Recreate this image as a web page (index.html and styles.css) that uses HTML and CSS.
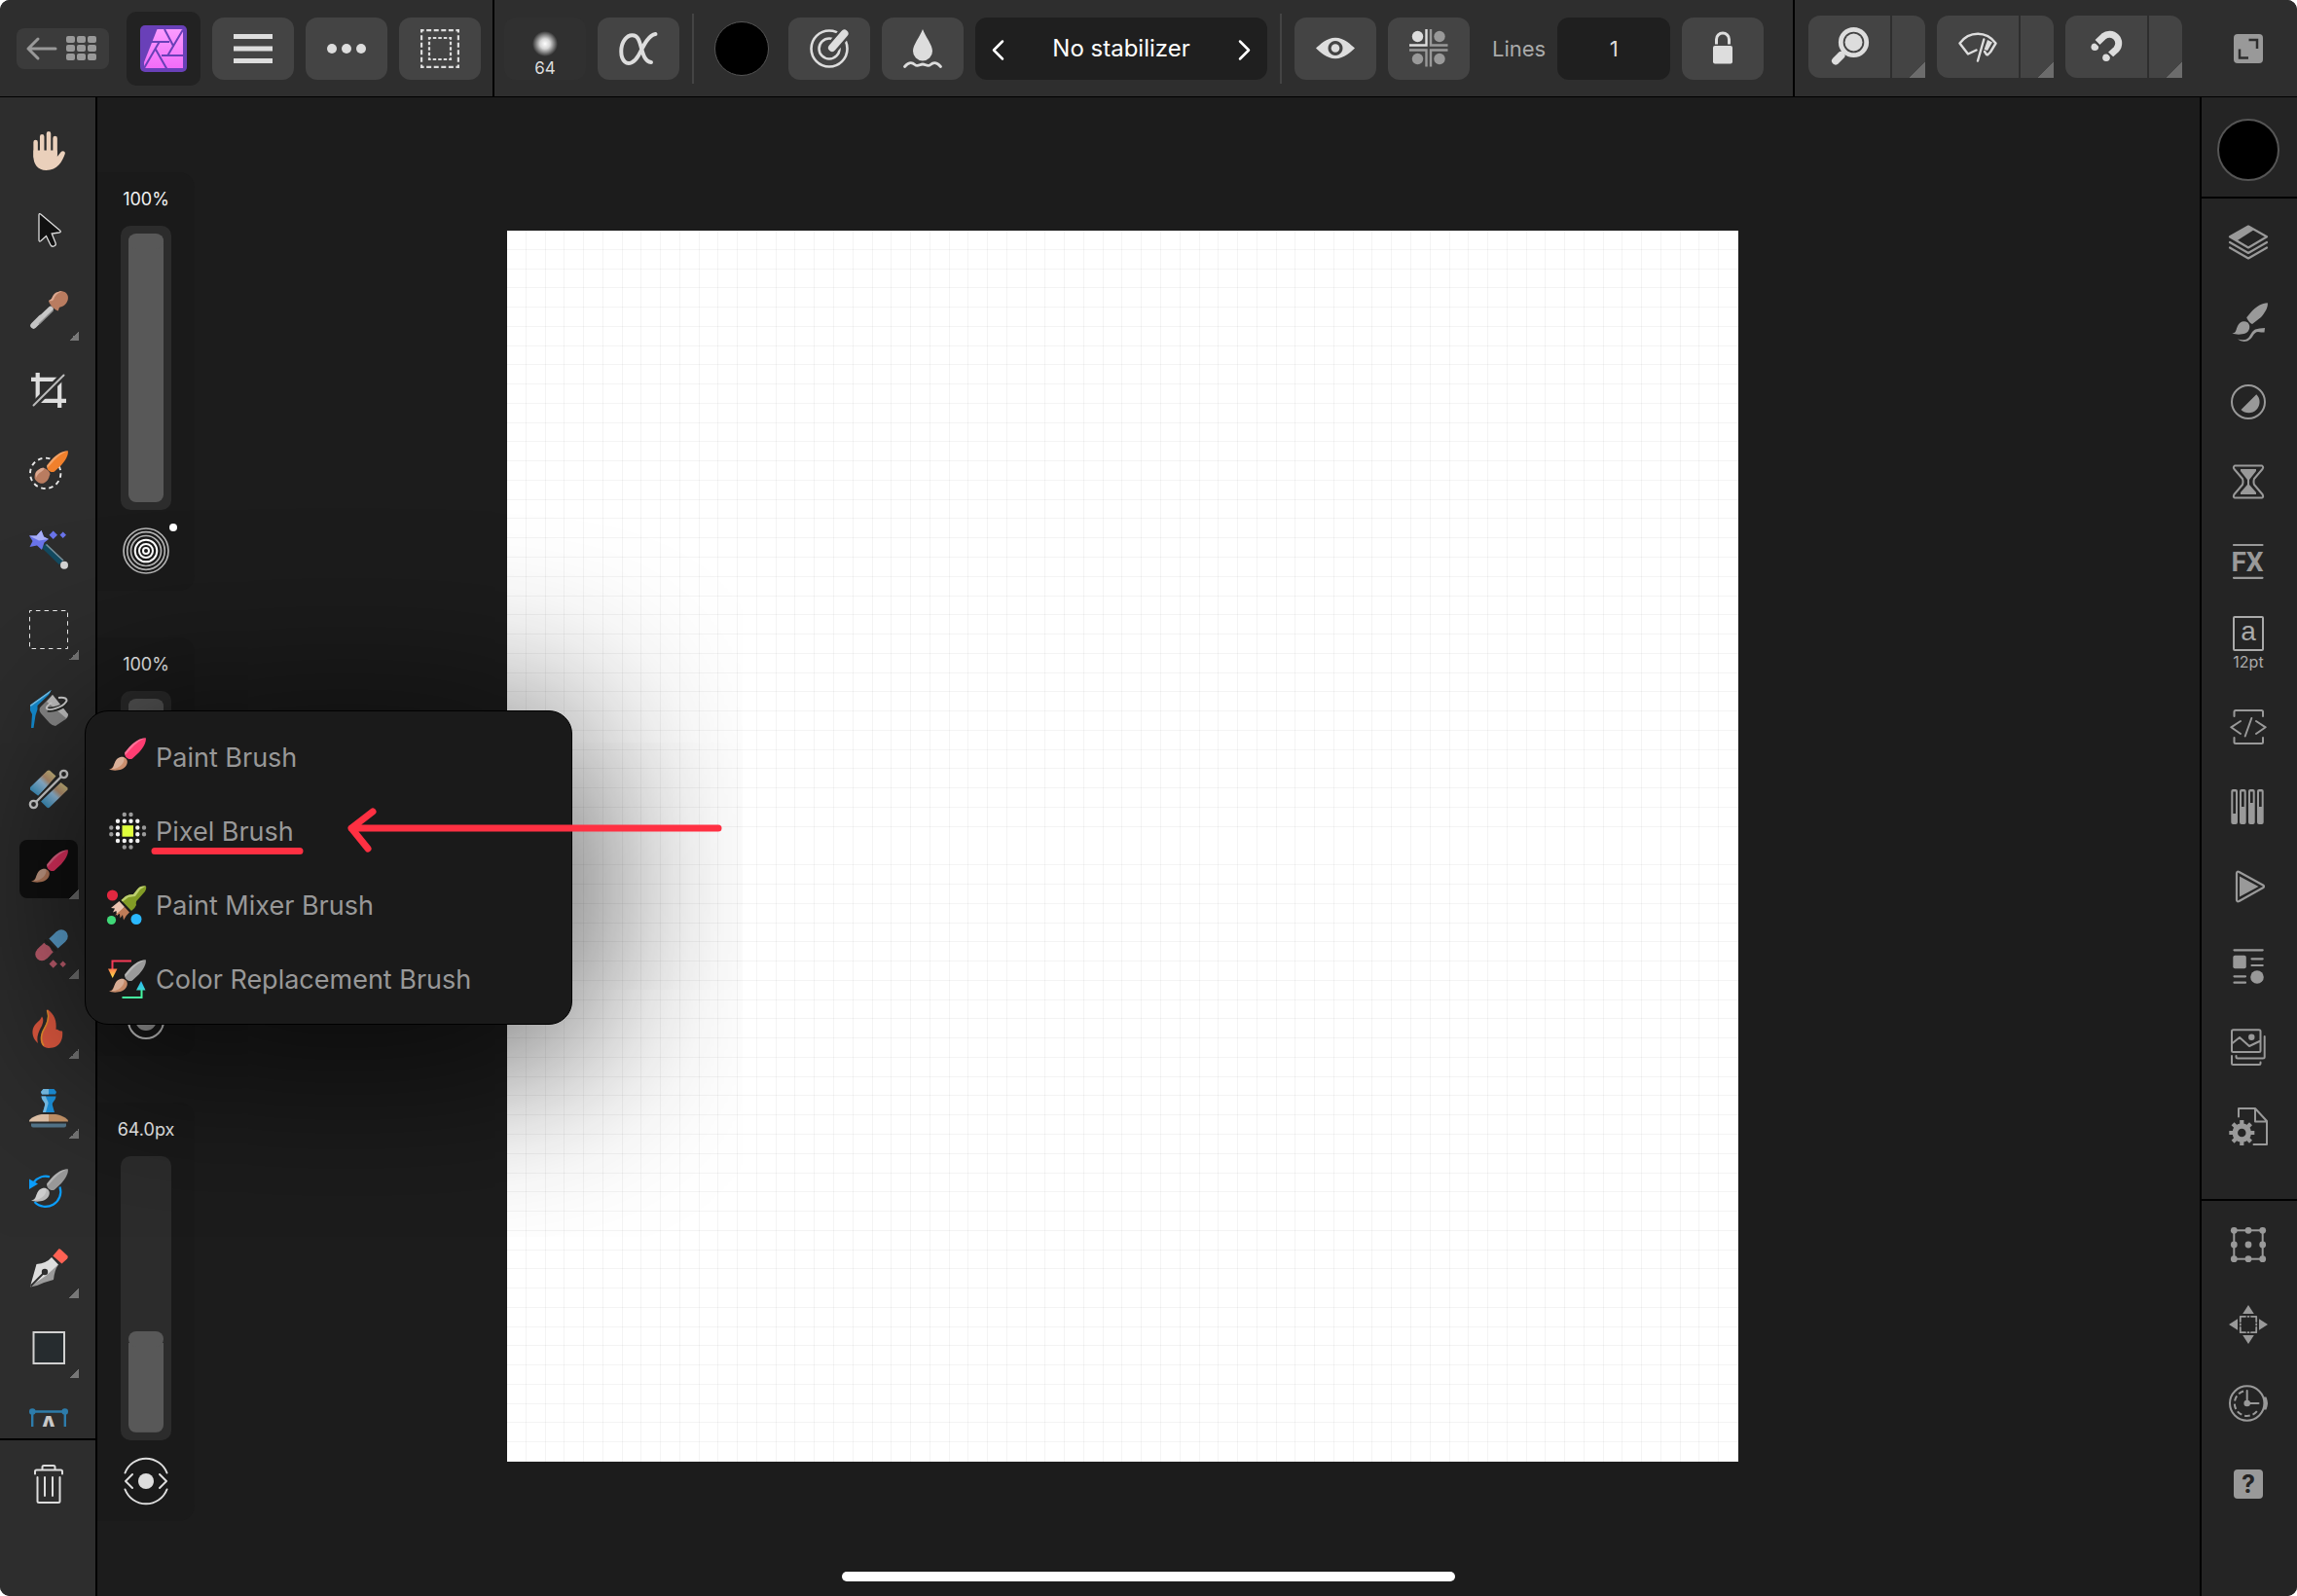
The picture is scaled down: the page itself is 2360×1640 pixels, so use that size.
FILE: index.html
```html
<!DOCTYPE html>
<html lang="en">
<head>
<meta charset="utf-8">
<meta name="viewport" content="width=device-width, initial-scale=1">
<title>Photo editor</title>
<link rel="stylesheet" href="styles.css">
</head>
<body>
<svg class="defs" width="0" height="0" aria-hidden="true">
  <defs>
    <linearGradient id="tanBlue" x1="1" y1="0" x2="0" y2="1"><stop offset="0" stop-color="#e0d68a"/><stop offset=".35" stop-color="#c09a78"/><stop offset=".5" stop-color="#9cc8ea"/><stop offset="1" stop-color="#2089bd"/></linearGradient>
    <linearGradient id="pink" x1="0" y1="0" x2="0" y2="1"><stop offset="0" stop-color="#fb9cff"/><stop offset="1" stop-color="#f26cf8"/></linearGradient>
    <linearGradient id="warm" x1="0" y1="0" x2="0" y2="1"><stop offset="0" stop-color="#fa7a4c"/><stop offset="1" stop-color="#ffe94a"/></linearGradient>
    <linearGradient id="cool" x1="0" y1="0" x2="0" y2="1"><stop offset="0" stop-color="#2cb4f6"/><stop offset="1" stop-color="#3cd8d0"/></linearGradient>
    <radialGradient id="soft"><stop offset="0" stop-color="#fff"/><stop offset=".4" stop-color="#fff" stop-opacity=".8"/><stop offset="1" stop-color="#fff" stop-opacity="0"/></radialGradient>
    <symbol id="handle" viewBox="0 0 40 40"><path fill="currentColor" d="M39.8.3C34 .5 28 4 23 9.500L18.200 15.200C18 18 19 20 21 21.200C23 22.500 25 22.200 26 21.500L33 15C38 9.500 40.500 4 39.800.3Z"/><path fill="#fff" fill-opacity=".28" d="M39.800.3C34 .5 28 4 23 9.500L18.200 15.200C18 16 18 17 18.600 18L24 12C29 6.500 33 3 39.800.3Z"/></symbol>
    <symbol id="bristle" viewBox="0 0 40 40"><path fill="currentColor" d="M2 32.600C6 32 6.500 29 8 25.500C10 20.500 15.500 18 19.500 21.500C23 25.500 19 31 15 32.600C11 34 5 34 2 32.600Z"/><path fill="#fff" fill-opacity=".3" d="M4 32.500C7 31.500 6.500 29 8 25.500C10 20.500 14.500 19 17.500 20.300C18.500 25 14 32 4 32.500Z"/></symbol>
  </defs>
</svg>

<div class="app">
  <header class="topbar">
    <div class="group group-file">
      <button class="back" aria-label="Back to documents"><svg width="95" height="42" viewBox="0 0 95 42"><path class="line" stroke-width="3" d="M40 21H12M22 11 12 21 22 31"/><g fill="currentColor"><rect x="51" y="8" width="9" height="7" rx="2"/><rect x="62" y="8" width="9" height="7" rx="2"/><rect x="73" y="8" width="9" height="7" rx="2"/><rect x="51" y="17" width="9" height="7" rx="2"/><rect x="62" y="17" width="9" height="7" rx="2"/><rect x="73" y="17" width="9" height="7" rx="2"/><rect x="51" y="26" width="9" height="7" rx="2"/><rect x="62" y="26" width="9" height="7" rx="2"/><rect x="73" y="26" width="9" height="7" rx="2"/></g></svg></button>
      <button class="persona" aria-label="Photo persona"><svg width="48" height="48" viewBox="0 0 48 48"><rect width="48" height="48" rx="5" fill="#6940b8"/><path fill="url(#pink)" d="M17.500 4H44V44H4V38Z"/><path fill="none" stroke="#6940b8" stroke-width="2" d="M25 4 34 21M44 4.500 28 31.500M22 31H44M15.500 24 27.500 45M4 44 20 16.500M8 17H30"/></svg></button>
      <button class="btn" aria-label="Menu"><svg class="icon" viewBox="0 0 40 40"><path fill="currentColor" d="M0 5h40v5H0zM0 17.500h40v5H0zM0 30h40v5H0z"/></svg></button>
      <button class="btn" aria-label="More"><svg class="icon" viewBox="0 0 40 40"><g fill="currentColor"><circle cx="5" cy="20" r="5"/><circle cx="20" cy="20" r="5"/><circle cx="35" cy="20" r="5"/></g></svg></button>
      <button class="btn" aria-label="Selection"><svg class="icon" viewBox="0 0 40 40"><g fill="none" stroke="currentColor" stroke-width="2.200"><rect x="1.100" y="1.100" width="37.800" height="37.800" stroke-dasharray="5 2.560" stroke-dashoffset="2.500"/><rect x="9" y="9" width="22" height="22" stroke-dasharray="3.500 2" stroke-dashoffset="1.700"/></g></svg></button>
    </div>

    <div class="group group-context">
      <button class="btn preview" aria-label="Brush size"><svg width="28" height="28" viewBox="0 0 28 28"><circle cx="14" cy="13" r="13" fill="url(#soft)"/></svg><span>64</span></button>
      <button class="btn" aria-label="Protect alpha"><svg class="icon" viewBox="0 0 40 40"><path class="line" stroke-width="4" d="M37.500 5C29 6.500 24 20 20 27C16 34 10 37 6 33.500C1 29 1 17 6 10.500C10 5 17 4.500 20 10.500C24 19 24 33 33 34"/></svg></button>
      <span class="separator"></span>
      <button class="swatch" aria-label="Brush color"></button>
      <button class="btn" aria-label="Brush settings"><svg class="icon" viewBox="0 0 40 40"><circle class="line" cx="20" cy="20" r="18.500" stroke-width="2.600"/><circle class="line" cx="20" cy="20" r="10.500" stroke-width="2.600"/><path stroke="#444" stroke-width="13" stroke-linecap="round" d="M24 18 35 5"/><path class="line" stroke-width="8" d="M23 19 35.500 4.500"/></svg></button>
      <button class="btn" aria-label="Wet edges"><svg class="icon" viewBox="0 0 40 40"><path fill="currentColor" d="M20 0C23 8 30 16 30 22.500A10 10 0 0 1 10 22.500C10 16 17 8 20 0Z"/><path class="line" stroke-width="2.800" d="M1.500 38.500C6 33.500 9 34 12 36.500C15 39 17 36 20 36C23 36 25 39 28 36.500C31 34 34 33.500 38.500 38.500"/></svg></button>
      <div class="stepper">
        <button aria-label="Previous stabilizer"><svg width="20" height="24" viewBox="0 0 20 24"><path class="line" stroke-width="2.500" d="M14 4.500 5 13.500 14 22.500"/></svg></button>
        <span>No stabilizer</span>
        <button aria-label="Next stabilizer"><svg width="20" height="24" viewBox="0 0 20 24"><path class="line" stroke-width="2.500" d="M6 4.500 15 13.500 6 22.500"/></svg></button>
      </div>
      <span class="separator"></span>
      <button class="btn" aria-label="Show symmetry"><svg class="icon" viewBox="0 0 40 40"><path fill="currentColor" fill-rule="evenodd" d="M0 19.500C4 16 11 8.700 20 8.700S36 16 40 19.500C36 23 29 30.300 20 30.300S4 23 0 19.500ZM20 12a7.500 7.500 0 1 0 .01 0Z"/><circle cx="20" cy="19.500" r="4.300" fill="currentColor"/></svg></button>
      <button class="btn" aria-label="Mirror"><svg class="icon" viewBox="0 0 40 40"><g fill="#999"><circle cx="31" cy="7.500" r="5.700"/><circle cx="8.500" cy="30.500" r="5.700"/><circle cx="31" cy="30.500" r="5.700"/></g><circle cx="8.500" cy="7.500" r="5.700" fill="currentColor"/><g fill="none" stroke-width="2.400" stroke="#999"><path d="M22 0V16.500H39.500M39.500 21.500H22V38.500M17.500 38.500V21.500H0"/><path stroke="#dcdcdc" d="M17.500 0V16.500H0"/></g></svg></button>
      <label class="field-label" for="lines">Lines</label>
      <input class="field" id="lines" type="text" value="1">
      <button class="btn" aria-label="Lock"><svg class="icon" viewBox="0 0 40 40"><rect x="10" y="17" width="20" height="18.500" rx="2" fill="currentColor"/><path fill="none" stroke="currentColor" stroke-width="3" d="M13.500 15.500V10.500A6.500 6.500 0 0 1 26.500 10.500V15.500"/></svg></button>
    </div>

    <div class="group group-view">
      <div class="split"><button aria-label="Zoom preview"><svg class="icon" viewBox="0 0 40 40"><circle cx="24.500" cy="15.500" r="13.200" fill="none" stroke="currentColor" stroke-width="4.800"/><circle cx="24.500" cy="15.500" r="9" fill="currentColor"/><path class="line" stroke-width="8" d="M11.500 29 6 34.500"/></svg></button><button class="more" aria-label="Zoom options"></button></div>
      <div class="split"><button aria-label="Clear view"><svg class="icon" viewBox="0 0 40 40"><path class="line" stroke-width="2.400" d="M18.500 23.500 10 27.500 1.500 16.500C11 3.500 29 3.500 38.500 16.500L33 25.500 30 28.500M26.300 12.500 20 34.500M27 25 29 28"/><path fill="currentColor" d="M30 13 35 15.500 30 24 26.500 23Z"/></svg></button><button class="more" aria-label="Clear view options"></button></div>
      <div class="split"><button aria-label="Snapping"><svg class="icon" viewBox="0 0 40 40"><path fill="none" stroke="currentColor" stroke-width="7" d="M11 15.500 17.500 9.300A9.300 9.300 0 0 1 30.500 22.500L24 28.500"/><g fill="currentColor"><circle cx="8.300" cy="20.300" r="3.800"/><circle cx="20" cy="31.200" r="3.800"/></g><path stroke="#444" stroke-width="2" d="M8 14.500 14 20M20.500 25.500 27 31.500"/></svg></button><button class="more" aria-label="Snapping options"></button></div>
      <button class="fullscreen" aria-label="Full screen"><svg width="30" height="30" viewBox="0 0 30 30"><rect width="30" height="30" rx="4" fill="#999"/><path fill="none" stroke="#2e2e2e" stroke-width="2.500" d="M15.500 6H24V15M6 15.500V24.500H15"/></svg></button>
    </div>
  </header>

  <nav class="tools" aria-label="Tools">
    <div class="tool-list">
      <button class="tool" aria-label="Hand"><svg class="icon" viewBox="0 0 40 40"><path fill="none" stroke="#ead0bb" stroke-width="4.500" stroke-linecap="round" d="M6.600 11V26M13.200 5.200V24M20 2.300V24M26.600 7V24"/><path fill="#ead0bb" d="M4.400 19.500H28.800V26L33 20.800C34.500 19.300 37.500 20.500 36.800 23C34 31 29 40 17.500 40C8.500 40 4.400 33 4.400 26Z"/></svg></button>
      <button class="tool" aria-label="Move"><svg class="icon" viewBox="0 0 40 40"><path fill="#111" stroke="#ddd" stroke-width="1.300" d="M10 4V29.500Q10 32 12 30.500L17.500 25.500 21.800 34.500Q23 37 25.500 36Q28 35 27 32.500L23.200 23 30.500 22Q33.500 21.500 31.500 19.800L12 3.200Q10 1.800 10 4Z"/></svg></button>
      <button class="tool has-more" aria-label="Color picker"><svg class="icon" viewBox="0 0 40 40"><path stroke="#c8c8c8" stroke-width="5.500" stroke-linecap="round" d="M22 18.500 12 28"/><path stroke="#c4c4c4" stroke-width="6.500" stroke-linecap="round" d="M12 28 4.500 35.500"/><path stroke="#8f8f8f" stroke-width="1.500" d="M24.500 20 10 34"/><path fill="#b97c60" d="M20 10.500C21 8.500 22.500 9.500 23.500 7C25 2 30 0 34 .2C38.500.8 41 5 39.600 9.500C38 14 35 16 32 16.500C30 17 31 19 29.500 20.500C26 19 21.500 15 20 10.500Z"/><path fill="#dba890" d="M20 10.500C21 8.500 22.500 9.500 23.500 7C25 2 30 0 34 .2C29 2 26 5 25 9C23 11 22 10 20 10.500Z"/></svg></button>
      <button class="tool" aria-label="Crop"><svg class="icon" viewBox="0 0 40 40"><path fill="none" stroke="#ddd" stroke-width="4.200" d="M8.700 2V30.900H38M2 8.900H31.200V38"/><path stroke="#2d2d2d" stroke-width="7" d="M4.500 35.500 35.500 4.500"/><path stroke="#bbb" stroke-width="2" stroke-linecap="round" d="M4.500 35.500 35.500 4.500"/></svg></button>
      <button class="tool" aria-label="Selection brush"><svg class="icon" viewBox="0 0 40 40"><circle cx="16.700" cy="23.300" r="15.700" fill="none" stroke="#e8e8e8" stroke-width="1.900" stroke-dasharray="4.500 3.700"/><path stroke="#2d2d2d" stroke-width="11" d="M17 22 31 8"/><use href="#handle" color="#f0802c"/><path fill="#b97c60" d="M7 22C10 19 13 17 15.500 18C18 19 21 21 21.500 24C20 27 21 30 15 33.500C11 35 6 31 5.500 28C5.500 25 6 23 7 22Z"/><path fill="#dba890" d="M7 22C10 19 13 17 15.500 18C15 22 10 21 7 28Q6 25 7 22Z"/></svg></button>
      <button class="tool" aria-label="Flood select"><svg class="icon" viewBox="0 0 40 40"><path stroke="#134a60" stroke-width="6.500" d="M15 15.500 33 33"/><path stroke="#7b929c" stroke-width="1.600" d="M17.500 14.500 35 31"/><circle cx="36" cy="35.700" r="4" fill="#d5d5d5"/><path fill="#6a74ea" d="M12.500 0 15 6.500 20 9 15.500 12.500 13 20 8 15.500.5 17 3.500 11 0 5.500 7.500 5.500Z"/><path fill="#aab0f8" d="M12.500 0 15 6.500 20 9 10 10.500 0 5.500 7.500 5.500Z"/><path fill="#6a74ea" d="M24.700.5 29 4.700 24.700 9 20.500 4.700ZM34.700 1.500 38 4.700 34.700 8 31.500 4.700Z"/></svg></button>
      <button class="tool has-more" aria-label="Marquee"><svg class="icon" viewBox="0 0 40 40"><rect x=".5" y=".5" width="39" height="39" fill="none" stroke="#f0f0f0" stroke-width="1" stroke-dasharray="4.500 4.167" stroke-dashoffset="2.250"/></svg></button>
      <button class="tool" aria-label="Flood fill"><svg class="icon" viewBox="0 0 40 40"><path fill="#1590d6" d="M22.700 0 1 15.500V21L3 25 2 39H4.500L6.500 26 8.500 20V16L20 5Z"/><path fill="#7cc8f0" d="M22.700 0 1 15.500 1.500 17 21 3Z"/><path fill="#8a8a8a" d="M12 17 24 5 40 25Q40 29 36 31L27 37Q24 37 21 34L12 24Q9 20 12 17Z"/><path fill="#c4c4c4" d="M24 5 40 25Q40 27 38 29L18 12Z"/><path fill="none" stroke="#262826" stroke-width="5" d="M19 20C24 21 36 18 38 12"/><path fill="none" stroke="#d5d5d5" stroke-width="2" d="M30 8C36 7 40 9 38 12C34 18 20 22 18 19C17 17 20 15 23 13"/></svg></button>
      <button class="tool" aria-label="Gradient"><svg class="icon" viewBox="0 0 40 40"><path fill="url(#tanBlue)" d="M18.500 1Q20.500 0 22 1.500L27.500 6.500 9.500 27 1 20.500V18Z"/><path fill="url(#tanBlue)" d="M32.500 13 39.500 18.500V20.500L21 38.500Q19.500 40 18 38.500L12 32.500Z"/><path stroke="#2a2b2a" stroke-width="6" d="M7 33 33 7"/><path stroke="#ddd" stroke-width="2.400" d="M7 33 33 7"/><g fill="none" stroke="#ddd" stroke-width="2.400"><circle cx="4.500" cy="35.500" r="3.600"/><circle cx="35.500" cy="4.500" r="3.600"/></g></svg></button>
      <button class="tool has-more active" aria-label="Paint brush"><svg class="icon" viewBox="0 0 40 40"><use href="#handle" color="#f53568"/><use href="#bristle" color="#c68664"/></svg></button>
      <button class="tool has-more" aria-label="Erase"><svg class="icon" viewBox="0 0 40 40"><path fill="none" stroke="#cf6577" stroke-width="13.500" stroke-linecap="round" d="M13 25.500 16 22.500"/><path stroke="#cf6577" stroke-width="13.500" d="M13 25.500 20 18.500"/><path stroke="#63aee0" stroke-width="13.500" stroke-linecap="round" d="M31 9 33 7"/><path stroke="#63aee0" stroke-width="13.500" d="M25 14.500 33 7"/><path stroke="#242624" stroke-width="2" d="M16 11 28 22"/><path fill="#cf6577" d="M24.700 31.300 28.900 35.500 24.700 39.700 20.500 35.500ZM34.700 32.500 37.900 35.700 34.700 38.900 31.500 35.700Z"/></svg></button>
      <button class="tool has-more" aria-label="Burn"><svg class="icon" viewBox="0 0 40 40"><path fill="#e85c42" d="M13 7.500C15 10 14.500 13 13 17C9 24 7.500 29 9 35C4 31 2 24 4.500 18.500C7 13.500 11.500 12 13 7.500Z"/><path fill="#e85c42" d="M18.500 0C26 5 28.500 12 27.500 21C29.500 20 30.500 23 34 22.500C35 29 33 40 20 40C12 40 9.500 31 13.500 23C16 18 21 10 18.500 0Z"/><path fill="none" stroke="#f09a2e" stroke-width="1.500" d="M18.500 1C22 12 16 18 13.500 24Q11 32 15 37.500"/></svg></button>
      <button class="tool has-more" aria-label="Clone"><svg class="icon" viewBox="0 0 40 40"><path fill="#1c94e0" d="M14.500 0H25.500L28 3 27 5.500H13L12 3ZM12.500 7.500H27.500C27 13 23 13 24 17L26 24H14L16 17C17 13 13 13 12.500 7.500Z"/><path fill="#7cc4ee" d="M14.500 0H20V5.500H13L12 3ZM12.500 7.500H17C18 12 21 13 19 17L17 24H14L16 17C17 13 13 13 12.500 7.500Z"/><path fill="#e8c9ae" d="M0 33C0 30 9 26 13 26H20V33.500H0Z"/><path fill="#c9986c" d="M20 26H27C31 26 40 30 40 33V33.500H20Z"/><path fill="#56788e" d="M2 35.500H38V37.500Q38 39.500 36 39.500H4Q2 39.500 2 37.500Z"/></svg></button>
      <button class="tool" aria-label="Undo brush"><svg class="icon" viewBox="0 0 40 40"><path fill="none" stroke="#0ca0ff" stroke-width="2.200" d="M21 8.200A15.500 15.500 0 0 0 5 13.500M31.500 18.500A15.500 15.500 0 0 1 5.500 34"/><path fill="#0ca0ff" d="M0 10.500 9 15.500 0 21Z"/><path stroke="#2d2d2d" stroke-width="10" d="M21 19 30 10"/><use href="#handle" color="#9c9c9c"/><use href="#bristle" color="#bdbdbd"/></svg></button>
      <button class="tool has-more" aria-label="Pen"><svg class="icon" viewBox="0 0 40 40"><path fill="#ff6254" d="M30.500.3Q31.500 0 32.500 1L39.500 7.500Q40.300 9 39 10.500L33.500 15.500 24.300 7.500Z"/><path fill="#9a9a9a" d="M1 39.500 30 16.500Q26 22 25 32Q17 34 8 38Z"/><path fill="#dedede" d="M1 39 7.500 16Q18 15 23 9L30 16.500 17 28Z"/><path stroke="#2d2d2d" stroke-width="1.800" d="M1.500 38.500 16 24"/><circle cx="16" cy="24" r="3.200" fill="#2d2d2d"/></svg></button>
      <button class="tool has-more" aria-label="Rectangle"><svg class="icon" viewBox="0 0 40 40"><rect x="4.500" y="4" width="31.500" height="32" fill="#262c2f" stroke="#d0d0d0" stroke-width="2"/></svg></button>
      <button class="tool" aria-label="Text"><svg class="icon" viewBox="0 0 40 40"><path fill="none" stroke="#2d7cab" stroke-width="2.400" d="M3.200 36V3.500H36.800V36Z"/><circle cx="3.300" cy="3.500" r="3.300" fill="#2d7cab"/><circle cx="36.700" cy="3.500" r="3.300" fill="#2d7cab"/><text x="20" y="29" text-anchor="middle" font-size="28" font-weight="600" fill="#c8c8c8">A</text></svg></button>
    </div>
    <div class="tool-footer">
      <button class="tool" aria-label="Delete"><svg class="icon" viewBox="0 0 40 40"><path class="line" stroke-width="2" d="M6 9.500V7Q6 5.500 7.500 5.500H32.500Q34 5.500 34 7V9.500M13.500 5V2.500Q13.500 1 15 1H25Q26.500 1 26.500 2.500V5M8.500 13V37.500Q8.500 39 10 39H30Q31.500 39 31.500 37.500V13M16 13V32M24 13V32"/></svg></button>
    </div>
  </nav>

  <main class="workspace">
    <div class="sliders">
      <div class="slider">
        <label for="opacity">100%</label>
        <input id="opacity" type="range" min="0" max="100" value="100" style="--level:100%">
        <svg width="48" height="48" viewBox="0 0 48 48"><g fill="none" stroke="#b5b5b5" stroke-width="1.700"><circle cx="24" cy="24" r="23"/><circle cx="24" cy="24" r="19.300"/><circle cx="24" cy="24" r="15.500"/></g><g fill="none" stroke="#fff" stroke-width="2"><circle cx="24" cy="24" r="11.300"/><circle cx="24" cy="24" r="7"/><circle cx="24" cy="24" r="3"/></g><circle cx="52" cy="0" r="4" fill="#fff"/></svg>
      </div>
      <div class="slider">
        <label for="flow">100%</label>
        <input id="flow" type="range" min="0" max="100" value="100" style="--level:100%">
        <svg width="48" height="48" viewBox="0 0 48 48"><circle cx="24" cy="29" r="18" fill="none" stroke="#ddd" stroke-width="2"/><circle cx="24" cy="28" r="11" fill="#aaa"/></svg>
      </div>
      <div class="slider">
        <label for="width">64.0px</label>
        <input id="width" type="range" min="0" max="100" value="34" style="--level:34%">
        <svg width="48" height="48" viewBox="0 0 48 48"><path class="line" stroke-width="2" d="M2.500 15.500A23 23 0 0 1 45.500 15.500M2.500 32.500A23 23 0 0 0 45.500 32.500M10 17 3 24 10 31M38 17 45 24 38 31"/><circle cx="24" cy="24" r="8" fill="#ddd"/></svg>
      </div>
    </div>
    <div class="stage"><div class="canvas"></div></div>
    <div class="home-indicator"></div>
  </main>

  <aside class="studio" aria-label="Studio panels">
    <div class="studio-color"><button class="swatch large" aria-label="Color"></button></div>
    <div class="studio-list studio-main">
      <button class="panel" aria-label="Layers"><svg class="icon" viewBox="0 0 40 40"><path class="line" stroke-width="2.200" d="M1 14.300 20 3.500 39 14.300 20 25.500ZM1 20 20 31 39 20M1 25.500 20 36.500 39 25.500"/><path fill="currentColor" d="M1 14.300 20 3.500 26 7 8 18.500Z"/></svg></button>
      <button class="panel" aria-label="Brushes"><svg class="icon" viewBox="0 0 40 40"><path fill="currentColor" d="M39.800.3C34 .5 28 4 23 9.500L18.200 15.200Q20 20 24 22L33 15C38 9.500 40.500 4 39.800.3ZM3.300 31.500C8 31 7 28 9 24C11 19 16 18 19.500 20.500C23 24 21 30 17 31.500C13 33 7 33 3.300 31.500ZM9 37.500Q13 38.500 17 38C22 37 22 30 27 27.500Q31 26 37 26L36.500 30.500Q33 30.500 30 30C25 30 25 37 19 39.500Q13 41 9 37.500Z"/></svg></button>
      <button class="panel" aria-label="Adjustments"><svg class="icon" viewBox="0 0 40 40"><circle class="line" cx="20" cy="20" r="17" stroke-width="2"/><path fill="currentColor" d="M12.500 28 28.300 12.200A11 11 0 0 1 12.500 28Z"/></svg></button>
      <button class="panel" aria-label="History"><svg class="icon" viewBox="0 0 40 40"><path class="line" stroke-width="2" d="M6 3.500H34Q36 5 34.500 7L26 17Q25 20 26 23L34.500 33Q36 36 34 36.500H6Q4 36 5.500 33L14 23Q15 20 14 17L5.500 7Q4 5 6 3.500Z"/><path fill="currentColor" d="M12 7H28V9L21 18V23L28 31V33H12V31L19 23V18L12 9Z"/></svg></button>
      <button class="panel" aria-label="Layer effects"><svg class="icon" viewBox="0 0 40 40"><path class="line" stroke-width="2.200" d="M5 3H34.500M5 36.800H34.500"/><text class="fx" x="19" y="30" text-anchor="middle">FX</text></svg></button>
      <button class="panel character" aria-label="Character"><svg width="32" height="36" viewBox="0 0 32 36"><rect class="line" x="1" y="1" width="30" height="34" rx="1" stroke-width="2"/><text class="glyph" x="16" y="25" text-anchor="middle">a</text></svg><span>12pt</span></button>
      <button class="panel" aria-label="Code"><svg class="icon" viewBox="0 0 40 40"><path class="line" stroke-width="2" d="M5.500 9V4.500Q5.500 3 7 3H33.500Q35 3 35 4.500V9M5.500 31V35.500Q5.500 37 7 37H33.500Q35 37 35 35.500V31M12 14 2.300 20.300 12 27M28 14 37.700 20.300 28 27M23.300 11 16.700 29.500"/></svg></button>
      <button class="panel" aria-label="Channels"><svg class="icon" viewBox="0 0 40 40"><path fill="currentColor" fill-rule="evenodd" d="M4.300 2H7Q9 2 9 4V36Q9 38 7 38H4.300Q2.300 38 2.300 36V4Q2.300 2 4.300 2ZM4.300 4.500V27H7V4.500ZM13 2H15.700Q17.700 2 17.700 4V36Q17.700 38 15.700 38H13Q11 38 11 36V4Q11 2 13 2ZM13 4.500V20H15.700V4.500ZM22 2H24.700Q26.700 2 26.700 4V36Q26.700 38 24.700 38H22Q20 38 20 36V4Q20 2 22 2ZM22 4.500V16H24.700V4.500ZM31 2H33.700Q35.700 2 35.700 4V36Q35.700 38 33.700 38H31Q29 38 29 36V4Q29 2 31 2ZM31 4.500V20H33.700V4.500Z"/></svg></button>
      <button class="panel" aria-label="Macros"><svg class="icon" viewBox="0 0 40 40"><path class="line" stroke-width="2.200" d="M8 6.500Q8 4 10.500 5L35 18.500Q37 20 35 21.200L10.500 35Q8 36 8 33.500Z"/><path fill="currentColor" d="M11 9.500 30.500 20 11 30.500Z"/></svg></button>
      <button class="panel" aria-label="Library"><svg class="icon" viewBox="0 0 40 40"><path class="line" stroke-width="2.200" d="M5.500 3.300H34.700M23.500 12.300H34.700M23.500 19H34.700M5.500 30.300H17M5.500 36.700H17"/><rect x="4.300" y="8.700" width="13.500" height="13.500" rx="2" fill="currentColor"/><circle cx="29" cy="31" r="6.800" fill="currentColor"/></svg></button>
      <button class="panel" aria-label="Stock"><svg class="icon" viewBox="0 0 40 40"><path class="line" stroke-width="2" d="M4.500 3.300H31Q32.500 3.300 32.500 4.800V24.500Q32.500 26 31 26H4.500Q3 26 3 24.500V4.800Q3 3.300 4.500 3.300ZM3 17.500 11 11 21 20 32.500 14.500M7.500 30V31Q7.500 32.500 9 32.500H35Q36.700 32.500 36.700 31V10M3 30V37.500Q3 39 4.500 39H31Q32.500 39 32.500 37.500V36.500"/><circle cx="23.300" cy="10.700" r="3.200" fill="currentColor"/></svg></button>
      <button class="panel" aria-label="Document setup"><svg class="icon" viewBox="0 0 40 40"><path class="line" stroke-width="2" d="M10 10.500V2H27L39 15V39H25.500M27 2V15.500H39"/><circle cx="13.300" cy="27" r="7" fill="none" stroke="currentColor" stroke-width="5.500"/><path stroke="currentColor" stroke-width="4.200" d="M13.300 14V19M13.300 35V40M.3 27H5M21 27H26.300M4.100 17.800 7.600 21.300M19 32.700 22.500 36.200M22.500 17.800 19 21.300M7.600 32.700 4.100 36.200"/></svg></button>
    </div>
    <div class="studio-list">
      <button class="panel" aria-label="Transform"><svg class="icon" viewBox="0 0 40 40"><rect x="5.300" y="5.300" width="29.400" height="29.400" fill="none" stroke="currentColor" stroke-width="2"/><g fill="currentColor"><circle cx="5.300" cy="5.300" r="3.400"/><circle cx="20" cy="5.300" r="3.400"/><circle cx="34.700" cy="5.300" r="3.400"/><circle cx="5.300" cy="20" r="3.400"/><circle cx="20" cy="20" r="3.400"/><circle cx="34.700" cy="20" r="3.400"/><circle cx="5.300" cy="34.700" r="3.400"/><circle cx="20" cy="34.700" r="3.400"/><circle cx="34.700" cy="34.700" r="3.400"/></g></svg></button>
      <button class="panel" aria-label="Navigator"><svg class="icon" viewBox="0 0 40 40"><path fill="currentColor" d="M20 0 25.800 9H14.200ZM20 40 25.800 31H14.200ZM0 20 9 14.200V25.800ZM40 20 31 14.200V25.800Z"/><path class="line" stroke-width="1.800" d="M11.800 17V11.800H17M23 11.800H28.200V17M28.200 23V28.200H23M17 28.200H11.800V23M11.800 19.500V20.500M28.200 19.500V20.500M19.500 11.800H20.500M19.500 28.200H20.500"/></svg></button>
      <button class="panel" aria-label="Timeline"><svg class="icon" viewBox="0 0 40 40"><circle class="line" cx="18.700" cy="19" r="17.700" stroke-width="2"/><path class="line" stroke-width="2" d="M18.700 6V19H30.500"/><path fill="none" stroke="currentColor" stroke-width="2" stroke-dasharray="5.500 3" d="M15 6.500A13 13 0 1 0 29 27"/><circle cx="18.700" cy="19" r="3.300" fill="currentColor"/><path fill="currentColor" d="M36 12.500H38.500Q40 17 40 19Q40 21 38.500 25.500H36Z"/></svg></button>
      <button class="panel" aria-label="Help"><svg class="icon" viewBox="0 0 40 40"><rect x="5" y="5" width="30" height="30" rx="4" fill="currentColor"/><text class="help" x="20" y="29" text-anchor="middle">?</text></svg></button>
    </div>
  </aside>

  <div class="flyout" role="menu">
    <button role="menuitem"><svg class="icon" viewBox="0 0 40 40"><use href="#handle" color="#ff3d72"/><use href="#bristle" color="#cb8f6e"/></svg>Paint Brush</button>
    <button role="menuitem"><svg class="icon" viewBox="0 0 40 40"><path fill="none" stroke="#9a9a9a" stroke-width="4.400" stroke-linecap="round" d="M17.800 3h.01M24.500 3h.01M17.800 36.500h.01M24.500 36.500h.01M4.300 16.500h.01M4.300 23.200h.01M38 16.500h.01M38 23.200h.01"/><path fill="none" stroke="#f2f2f2" stroke-width="4.400" stroke-linecap="round" d="M11 9.800h.01M17.800 9.800h.01M24.500 9.800h.01M31.300 9.800h.01M11 16.500h.01M31.300 16.500h.01M11 23.200h.01M31.300 23.200h.01M11 30h.01M17.800 30h.01M24.500 30h.01M31.300 30h.01"/><rect x="15.500" y="14.200" width="11.500" height="11.500" fill="#dfff3c"/></svg>Pixel Brush</button>
    <button role="menuitem"><svg class="icon" viewBox="0 0 40 40"><circle cx="5.500" cy="10" r="5.600" fill="#e22840"/><circle cx="4.500" cy="35.500" r="4.600" fill="#40d878"/><circle cx="30" cy="34.500" r="5.500" fill="#2ab8ff"/><path fill="#829c26" d="M39.800.5C36 0 33 1 31 4L27 9Q22 9 19 11L14.500 15 25 26Q29 23 30 20Q29 16 32 14L39 6Q41 2 39.800.5Z"/><path fill="#bdcf70" d="M39.800.5C36 0 33 1 31 4L27 9Q22 9 19 11L14.500 15 16 16.500 22 12 29 11 34 4Z"/><path fill="#e9c3b0" d="M12.500 16 18 22 10 31 9.500 26 6 27.500 8 23.500 4 23Z"/><path fill="#c07c58" d="M18 22 23 27.500Q19 31 17 35.500L16 30 13.500 33.500 13 29 8 30.500Z"/></svg>Paint Mixer Brush</button>
    <button role="menuitem"><svg class="icon" viewBox="0 0 40 40"><path fill="none" stroke="#f53a56" stroke-width="2" d="M25 1.500H5.500V10"/><path fill="url(#warm)" d="M1 9.500H10.500L5.700 19Z"/><path fill="none" stroke="#45f5a0" stroke-width="2" d="M15.500 39H35.500V31"/><path fill="url(#cool)" d="M30 31.500 35 22 39.500 31.500Z"/><use href="#handle" color="#9a9a9a"/><use href="#bristle" color="#c68a68"/></svg>Color Replacement Brush</button>
  </div>

  <svg class="annotation" width="600" height="60" viewBox="0 0 600 60" aria-hidden="true"><path fill="none" stroke="#ff3042" stroke-width="7" stroke-linecap="round" stroke-linejoin="round" d="M9 44.500H158M588 21H211M233 4 211 21 228 42"/></svg>
</div>
</body>
</html>
```
FILE: styles.css
```css
* { box-sizing: border-box; }

body {
  margin: 0;
  background: #fff;
  color: #ddd;
  font-family: Inter, "Liberation Sans", sans-serif;
}

button {
  padding: 0;
  border: 0;
  background: none;
  color: inherit;
  font: inherit;
}

svg { display: block; overflow: visible; flex: none; }
.defs { position: absolute; }
.icon { width: 40px; height: 40px; }
.line {
  fill: none;
  stroke: currentColor;
  stroke-linecap: round;
  stroke-linejoin: round;
}

.app {
  position: relative;
  display: grid;
  grid-template: 100px minmax(0, 1fr) / 100px minmax(0, 1fr) 100px;
  height: 100vh;
  border-radius: 10px;
  overflow: hidden;
  background: #1c1c1c;
}

/* Top bar */
.topbar {
  grid-column: 1 / -1;
  display: flex;
  background: #2e2e2e;
  border-bottom: 1px solid #000;
}
.group { display: flex; align-items: center; gap: 12px; }
.group-file { padding: 0 12px 0 17px; border-right: 2px solid #000; }
.group-context { flex: 1; padding-left: 10px; border-right: 2px solid #000; }
.group-view { width: 516px; padding: 0 35px 0 14px; }

.back {
  margin-right: 6px;
  border-radius: 8px;
  background: #3b3b3b;
  color: #999;
}
.persona {
  display: grid;
  place-items: center;
  width: 76px;
  height: 76px;
  border-radius: 10px;
  background: #222;
}
.btn {
  display: grid;
  place-items: center;
  width: 84px;
  height: 64px;
  border-radius: 12px;
  background: #444;
}
.preview {
  align-content: end;
  padding-bottom: 2px;
  background: #303030;
  font-size: 17px;
  line-height: 20px;
}
.separator { width: 2px; height: 72px; margin: 0 1px; background: #444; }
.swatch {
  width: 56px;
  height: 56px;
  margin: 0 8px;
  border: 1px solid #555;
  border-radius: 50%;
  background: #000;
}
.stepper {
  display: flex;
  align-items: center;
  justify-content: space-between;
  width: 300px;
  height: 64px;
  padding: 0 14px;
  border-radius: 12px;
  background: #1f1f1f;
  color: #fff;
  font-size: 24px;
}
.field-label { margin-left: 11px; color: #aaa; font-size: 22px; }
.field {
  width: 116px;
  height: 64px;
  border: 0;
  border-radius: 12px;
  background: #1f1f1f;
  color: #ddd;
  font: inherit;
  font-size: 22px;
  text-align: center;
}

.split { display: flex; gap: 2px; height: 64px; margin-bottom: 4px; }
.split button {
  display: grid;
  place-items: center;
  width: 84px;
  border-radius: 12px 0 0 12px;
  background: #444;
}
.split .more {
  width: 34px;
  border-radius: 0 12px 0 0;
  background: linear-gradient(135deg, transparent 50%, #6c6c6c 50%) right bottom / 16px 16px no-repeat #444;
}
.fullscreen { margin-left: auto; }

/* Tool column */
.tools {
  display: flex;
  flex-direction: column;
  min-height: 0;
  background: #2d2d2d;
  border-right: 2px solid #000;
}
.tool-list {
  flex: 1;
  display: flex;
  flex-direction: column;
  gap: 22px;
  min-height: 0;
  margin-bottom: 12px;
  padding: 25px 0 0 20px;
  overflow: hidden;
}
.tool {
  position: relative;
  display: grid;
  place-items: center;
  flex: none;
  width: 60px;
  height: 60px;
  border-radius: 8px;
}
.tool.active { background: #111; }
.has-more::after {
  content: "";
  position: absolute;
  right: -1px;
  bottom: -1px;
  width: 10px;
  height: 10px;
  background: linear-gradient(135deg, transparent 50%, #777 50%);
}
.tool-footer { height: 162px; padding: 15px 0 0 20px; border-top: 2px solid #000; }

/* Workspace */
.workspace { position: relative; display: flex; min-width: 0; }
.sliders {
  display: flex;
  flex-direction: column;
  gap: 48px;
  width: 100px;
  padding-top: 77px;
}
.slider {
  display: flex;
  flex-direction: column;
  align-items: center;
  gap: 18px;
  padding: 17px 0;
  border-radius: 0 16px 16px 0;
  background: #1a1a1a;
}
.slider label { padding-top: 2px; color: #f2f2f2; font-size: 18px; line-height: 18px; }
.slider input {
  appearance: none;
  writing-mode: vertical-lr;
  direction: rtl;
  width: 52px;
  height: 292px;
  margin: 0;
  padding: 8px;
  border-radius: 10px;
  background: #2c2c2c;
}
.slider input::-webkit-slider-runnable-track {
  width: 36px;
  border-radius: 8px;
  background: linear-gradient(#585858, #585858) bottom / 100% calc(var(--level) - 2px) no-repeat;
}
.slider input::-webkit-slider-thumb {
  appearance: none;
  width: 36px;
  height: 16px;
  border-radius: 8px;
  background: #585858;
}
.stage {
  flex: 1;
  display: grid;
  place-items: center;
  padding: 0 153px 2px 0;
}
.canvas {
  height: calc(100vh - 375px);
  aspect-ratio: 1;
  background:
    repeating-linear-gradient(to right, transparent 0 calc(100% / 64 - 1px), #0000000b calc(100% / 64 - 1px) calc(100% / 64)),
    repeating-linear-gradient(to bottom, transparent 0 calc(100% / 64 - 1px), #0000000b calc(100% / 64 - 1px) calc(100% / 64)),
    #fff;
}
.home-indicator {
  position: absolute;
  left: 50%;
  bottom: 15px;
  width: 630px;
  height: 10px;
  margin-left: -315px;
  border-radius: 5px;
  background: #fff;
}

/* Studio column */
.studio {
  display: flex;
  flex-direction: column;
  background: #242424;
  border-left: 2px solid #000;
  color: #999;
}
.studio-color { display: grid; place-items: center; height: 104px; padding: 6px 2px 0 0; border-bottom: 2px solid #000; }
.swatch.large { width: 64px; height: 64px; margin: 0; border: 2px solid #555; }
.studio-list { display: flex; flex-direction: column; padding: 4px 2px 0 0; }
.studio-main { padding-bottom: 34px; border-bottom: 2px solid #000; }
.panel { display: grid; place-items: center; height: 82px; }
.character {
  align-content: center;
  height: 88px;
  color: #aaa;
  font-size: 16px;
  line-height: 22px;
}
.panel text { fill: currentColor; }
.fx { font: 700 28px Roboto, sans-serif; }
.glyph { font: 28px "Liberation Sans", sans-serif; }
.panel .help { fill: #242424; font: 700 25px Inter, sans-serif; }

/* Tool flyout */
.flyout {
  position: absolute;
  left: 87px;
  top: 730px;
  width: 501px;
  padding: 9px 0 8px;
  border: 1px solid #000;
  border-radius: 24px;
  background: #1a1a1a;
  box-shadow: 0 20px 190px rgba(0, 0, 0, .9);
}
.flyout button {
  display: flex;
  align-items: center;
  gap: 10px;
  width: 100%;
  height: 76px;
  padding-left: 22px;
  color: #989898;
  font-size: 27px;
}

.annotation { position: absolute; left: 150px; top: 830px; }
```
